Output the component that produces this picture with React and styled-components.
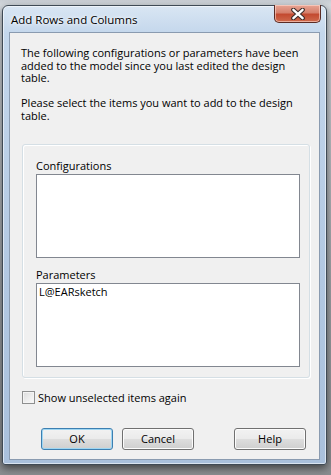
import styled, { createGlobalStyle } from 'styled-components';

const GlobalStyle = createGlobalStyle`
  html, body {
    margin: 0;
    padding: 0;
  }
  body {
    width: 331px;
    height: 475px;
    overflow: hidden;
    background: linear-gradient(#c9ced4 0px, #d6dbe0 5px, #9fa3a7 60%, #8a8d90 100%);
    font-family: "Open Sans", "Noto Sans", sans-serif;
  }
`;

const Window = styled.div`
  margin: 5px 0 0 2px;
  width: 325px;
  height: 460px;
  box-sizing: border-box;
  border: 1px solid #3f4a55;
  border-radius: 6px 6px 3px 3px;
  background: linear-gradient(180deg, #d9e6f3 0px, #c4d7ec 27px, #b2c8e2 60%, #a9c0dc 100%);
  box-shadow: 0 3px 9px rgba(0, 0, 0, 0.55), inset 0 0 0 1px rgba(255, 255, 255, 0.55);
  display: flex;
  flex-direction: column;
`;

const TitleBar = styled.div`
  height: 26px;
  display: flex;
  align-items: flex-start;
  justify-content: space-between;
  padding: 0 5px 0 8px;
`;

const Title = styled.div`
  font-size: 11.5px;
  line-height: 12px;
  margin-top: 8px;
  color: #000;
  text-shadow: 0 0 6px #fff, 0 0 3px #fff;
`;

const CloseButton = styled.div`
  width: 47px;
  height: 18px;
  margin-top: -1px;
  box-sizing: border-box;
  border: 1px solid #5a2b24;
  border-top: none;
  border-radius: 0 0 5px 5px;
  background: linear-gradient(180deg, #e8a493 0%, #d5806c 45%, #c34a30 55%, #cf6a4c 100%);
  box-shadow: inset 0 0 0 1px rgba(255, 220, 210, 0.6);
  display: flex;
  align-items: center;
  justify-content: center;
`;

const Client = styled.div`
  flex: 1;
  margin: 0 6px 4px 6px;
  border: 1px solid #8a9bb0;
  background: #f0f0f0;
  padding: 14px 9px 0 11px;
  display: flex;
  flex-direction: column;
`;

const Message = styled.p`
  margin: 0 0 ${(p) => p.gap}px 0;
  font-size: 11px;
  line-height: 12.7px;
  color: #000;
`;

const GroupBox = styled.fieldset`
  margin: 0 0 0 1px;
  padding: 14px 9px 11px 13px;
  height: 234px;
  box-sizing: border-box;
  border: 1px solid #d5dfe5;
  border-radius: 3px;
  box-shadow: inset 1px 1px 0 #fff, 1px 1px 0 #fff;
  display: flex;
  flex-direction: column;
`;

const FieldLabel = styled.div`
  font-size: 11px;
  line-height: 13px;
  margin-bottom: 2px;
  color: #000;
`;

const ListBox = styled.div`
  height: 84px;
  box-sizing: border-box;
  border: 1px solid #828790;
  background: #fff;
  padding: 1px 2px;
  margin-bottom: ${(p) => p.gap}px;
  font-size: 11px;
  line-height: 14px;
  color: #000;
`;

const CheckRow = styled.label`
  display: flex;
  align-items: center;
  gap: 3px;
  margin: 12px 0 0 1px;
  font-size: 11px;
  color: #000;
`;

const CheckBox = styled.span`
  width: 13px;
  height: 13px;
  box-sizing: border-box;
  border: 1px solid #8e8f8f;
  background: linear-gradient(135deg, #dcdcdc, #fbfbfb);
  box-shadow: inset 0 0 0 1px #f4f4f4;
`;

const ButtonRow = styled.div`
  display: flex;
  margin: 23px 0 0 20px;
`;

const Button = styled.button`
  width: 72px;
  height: 22px;
  margin-right: ${(p) => p.gap}px;
  padding: 0;
  box-sizing: border-box;
  border: 1px solid ${(p) => (p.primary ? '#3c7fb1' : '#707070')};
  border-radius: 3px;
  background: linear-gradient(180deg, #f2f2f2 0%, #ebebeb 48%, #dddddd 52%, #cfcfcf 100%);
  box-shadow: inset 0 0 0 1px ${(p) => (p.primary ? '#9fd6f2' : '#fcfcfc')};
  font-family: "Open Sans", "Noto Sans", sans-serif;
  font-size: 11px;
  color: #000;
`;

export default function App() {
  return (
    <>
      <GlobalStyle />
      <Window>
        <TitleBar>
          <Title>Add Rows and Columns</Title>
          <CloseButton>
            <svg width="16" height="12" viewBox="0 0 16 12">
              <path
                d="M3.4 1.8 L12.6 10.2 M12.6 1.8 L3.4 10.2"
                fill="none"
                stroke="#3a2a28"
                strokeWidth="4.5"
                strokeLinecap="round"
              />
              <path
                d="M3.4 1.8 L12.6 10.2 M12.6 1.8 L3.4 10.2"
                fill="none"
                stroke="#ffffff"
                strokeWidth="2.4"
                strokeLinecap="round"
              />
            </svg>
          </CloseButton>
        </TitleBar>
        <Client>
          <Message gap={12}>
            The following configurations or parameters have been added to the model since you last edited the design table.
          </Message>
          <Message gap={21}>
            Please select the items you want to add to the design table.
          </Message>
          <GroupBox>
            <FieldLabel>Configurations</FieldLabel>
            <ListBox gap={10} />
            <FieldLabel>Parameters</FieldLabel>
            <ListBox gap={0}>L@EARsketch</ListBox>
          </GroupBox>
          <CheckRow>
            <CheckBox />
            Show unselected items again
          </CheckRow>
          <ButtonRow>
            <Button primary gap={9}>OK</Button>
            <Button gap={40}>Cancel</Button>
            <Button gap={0}>Help</Button>
          </ButtonRow>
        </Client>
      </Window>
    </>
  );
}
